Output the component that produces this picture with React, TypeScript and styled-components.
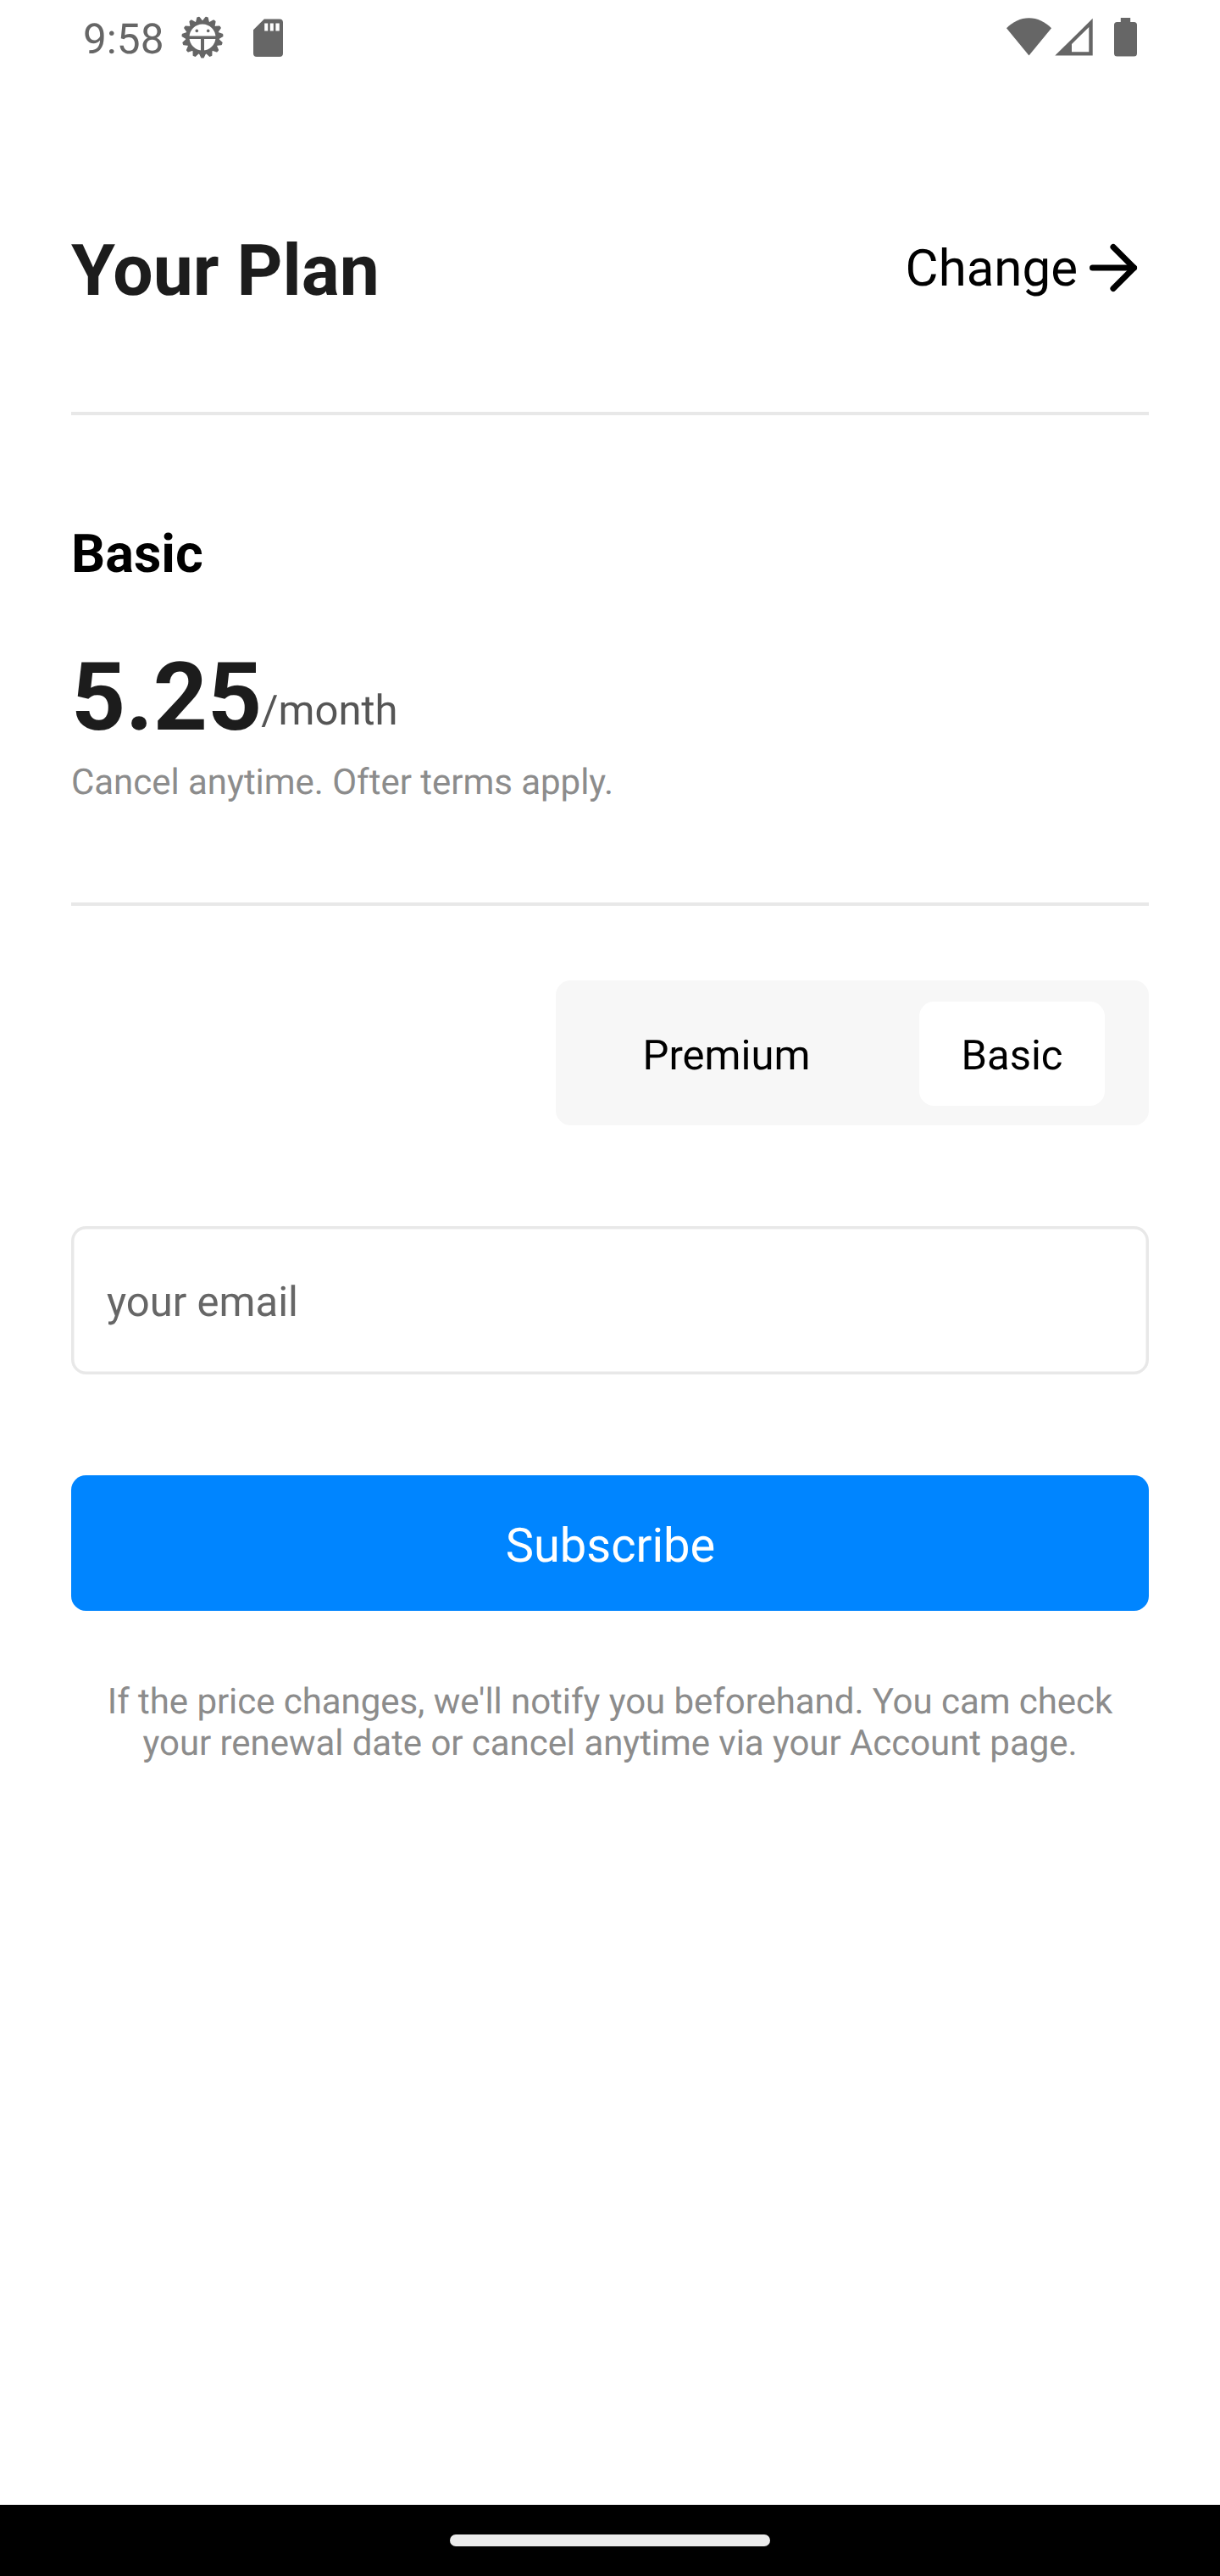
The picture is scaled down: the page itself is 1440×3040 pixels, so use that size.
import React, { useState } from 'react';
import styled, { createGlobalStyle } from 'styled-components';

const GlobalStyle = createGlobalStyle`
  *, *::before, *::after { box-sizing: border-box; }
  body {
    margin: 0;
    background: #ffffff;
    font-family: Roboto, "Liberation Sans", sans-serif;
    text-rendering: geometricPrecision;
  }
  button, input { font-family: inherit; text-rendering: inherit; }
`;

const Screen = styled.div`
  display: flex;
  flex-direction: column;
  width: 1440px;
  height: 3040px;
  background: #ffffff;
  color: #000000;
`;

const StatusBar = styled.header`
  display: flex;
  align-items: center;
  justify-content: space-between;
  height: 88px;
  padding: 0 98px;
  color: #666666;
`;

const StatusGroup = styled.div`
  display: flex;
  align-items: center;
`;

const Clock = styled.span`
  width: 116px;
  padding-top: 6px;
  font-size: 49.5px;
  line-height: 58px;
`;

const StatusIcon = styled.svg<{ $gap?: number }>`
  display: block;
  flex: none;
  margin-left: ${({ $gap = 0 }) => $gap}px;
  fill: currentColor;
`;

const Content = styled.main`
  display: flex;
  flex: 1;
  flex-direction: column;
  padding: 181px 84px 0;
`;

const TitleRow = styled.div`
  display: flex;
  align-items: center;
  justify-content: space-between;
  height: 100px;
`;

const Title = styled.h1`
  margin: 0;
  padding-top: 2px;
  color: #1c1c1c;
  font-size: 84px;
  font-weight: 700;
  line-height: 100px;
`;

const ChangeButton = styled.button`
  display: flex;
  align-items: center;
  height: 84px;
  margin-bottom: 7px;
  padding: 0;
  border: 0;
  background: none;
  color: #000000;
  font-size: 60px;
  line-height: 70px;
`;

const ChangeLabel = styled.span`
  padding-top: 2px;
`;

const Divider = styled.hr<{ $top: number }>`
  width: 100%;
  height: 4px;
  margin: ${({ $top }) => $top}px 0 0;
  border: 0;
  background: #e8e8e8;
`;

const Plan = styled.section`
  display: flex;
  flex-direction: column;
  padding-top: 128px;
`;

const PlanName = styled.h2`
  margin: 0;
  font-size: 63px;
  font-weight: 700;
  line-height: 74px;
`;

const PriceRow = styled.div`
  display: flex;
  align-items: flex-end;
  margin-top: 66px;
`;

const Price = styled.span`
  color: #1c1c1c;
  font-size: 112px;
  font-weight: 700;
  line-height: 132px;
`;

const Period = styled.span`
  margin-left: -1px;
  padding-bottom: 22px;
  color: #555555;
  font-size: 49px;
  line-height: 58px;
`;

const Terms = styled.p`
  margin: 9px 0 0;
  color: #8c8c8c;
  font-size: 42px;
  letter-spacing: -0.03px;
  line-height: 49px;
`;

const Segmented = styled.div`
  display: flex;
  align-items: center;
  align-self: flex-end;
  justify-content: space-between;
  width: 700px;
  height: 171px;
  margin-top: 88px;
  padding: 0 52px 0 53px;
  border-radius: 17.5px;
  background: #f7f7f7;
`;

const Segment = styled.button<{ $active: boolean }>`
  height: 123px;
  margin-top: 2px;
  padding: 5px 49.5px 0;
  border: 0;
  border-radius: 17.5px;
  background: ${({ $active }) => ($active ? '#ffffff' : 'transparent')};
  color: #000000;
  font-size: 49px;
  line-height: 58px;
`;

const EmailInput = styled.input`
  width: 100%;
  height: 175px;
  margin-top: 119px;
  padding: 4px 42px 0;
  border: 0;
  border-radius: 17.5px;
  outline: 0;
  background: #ffffff;
  box-shadow: inset 0 0 0 3.5px #e8e8e8;
  color: #000000;
  font-size: 49px;

  &::placeholder {
    color: #666666;
    opacity: 1;
  }
`;

const SubscribeButton = styled.button`
  height: 160px;
  margin-top: 119px;
  padding: 6px 0 0 1px;
  border: 0;
  border-radius: 17.5px;
  background: #0085ff;
  color: #ffffff;
  font-size: 56px;
  line-height: 66px;
`;

const Note = styled.p`
  margin: 83px 0 0;
  color: #8c8c8c;
  font-size: 42px;
  letter-spacing: -0.055px;
  line-height: 49px;
  text-align: center;
`;

const NavigationBar = styled.footer`
  display: flex;
  justify-content: center;
  height: 84px;
  padding-top: 35px;
  background: #000000;
`;

const HomeHandle = styled.div`
  width: 378px;
  height: 14px;
  border-radius: 7px;
  background: #ebebeb;
`;

const TOOTH_COUNT = 15;
const teeth = Array.from({ length: TOOTH_COUNT }, (_, i) => 180 + (i * 360) / TOOTH_COUNT);

const BugGearIcon = () => (
  <StatusIcon width="50" height="50" viewBox="-25 -25 50 50">
    {teeth.map((angle) => (
      <path
        key={angle}
        d="M-3.6 -18 L-1 -23.6 H1 L3.6 -18 Z"
        stroke="currentColor"
        strokeWidth="1.8"
        strokeLinejoin="round"
        transform={`rotate(${angle})`}
      />
    ))}
    <circle r="17.6" fill="none" stroke="currentColor" strokeWidth="4.2" />
    <path d="M-17 -1.5 H17 V2.1 H2 V18 H-2 V2.1 H-17 Z" />
    <circle cx="-6.7" cy="-7.6" r="1.8" />
    <circle cx="6.7" cy="-7.6" r="1.8" />
  </StatusIcon>
);

const SdCardIcon = () => (
  <StatusIcon $gap={35} width="35" height="45" viewBox="0 -0.5 35 45">
    <path
      fillRule="evenodd"
      d="M12.8 0 H31 Q35 0 35 4 V40.5 Q35 44.5 31 44.5 H4 Q0 44.5 0 40.5 V12.8 Z M13.2 5 V14 H17.2 V5 Z M19.8 5 V14 H23.8 V5 Z M26.4 5 V14 H30.8 V5 Z"
    />
  </StatusIcon>
);

const WifiIcon = () => (
  <StatusIcon width="53" height="46" viewBox="0 0 53 46">
    <path d="M26.5 44.4 L0 12.3 C7.5 4.6 16.5 0.2 26.5 0.2 S45.5 4.6 53 12.3 Z" />
  </StatusIcon>
);

const SignalIcon = () => (
  <StatusIcon $gap={4} width="45" height="46" viewBox="0 0 45 46">
    <path fillRule="evenodd" d="M0.3 44.5 L44.7 0.8 V44.5 Z M20 40.3 H40.3 V11 L20 31 Z" />
  </StatusIcon>
);

const BatteryIcon = () => (
  <StatusIcon $gap={25} width="27" height="46" viewBox="0 0 27 46">
    <path d="M7.8 0 H19.2 V5 H23.5 Q27 5 27 8.5 V42 Q27 45.5 23.5 45.5 H3.5 Q0 45.5 0 42 V8.5 Q0 5 3.5 5 H7.8 Z" />
  </StatusIcon>
);

const ArrowRightIcon = () => (
  <svg
    width="84"
    height="84"
    viewBox="0 0 24 24"
    fill="none"
    stroke="currentColor"
    strokeWidth="2"
    strokeLinecap="round"
    strokeLinejoin="round"
  >
    <path d="M5 12h14" />
    <path d="M12 5l7 7-7 7" />
  </svg>
);

const PLANS = ['Premium', 'Basic'];

export default function App() {
  const [plan, setPlan] = useState('Basic');

  return (
    <>
      <GlobalStyle />
      <Screen>
        <StatusBar>
          <StatusGroup>
            <Clock>9:58</Clock>
            <BugGearIcon />
            <SdCardIcon />
          </StatusGroup>
          <StatusGroup>
            <WifiIcon />
            <SignalIcon />
            <BatteryIcon />
          </StatusGroup>
        </StatusBar>
        <Content>
          <TitleRow>
            <Title>Your Plan</Title>
            <ChangeButton type="button">
              <ChangeLabel>Change</ChangeLabel>
              <ArrowRightIcon />
            </ChangeButton>
          </TitleRow>
          <Divider $top={117} />
          <Plan>
            <PlanName>{plan}</PlanName>
            <PriceRow>
              <Price>5.25</Price>
              <Period>/month</Period>
            </PriceRow>
            <Terms>Cancel anytime. Ofter terms apply.</Terms>
          </Plan>
          <Divider $top={117} />
          <Segmented>
            {PLANS.map((name) => (
              <Segment key={name} type="button" $active={name === plan} onClick={() => setPlan(name)}>
                {name}
              </Segment>
            ))}
          </Segmented>
          <EmailInput type="email" placeholder="your email" />
          <SubscribeButton type="button">Subscribe</SubscribeButton>
          <Note>
            If the price changes, we'll notify you beforehand. You cam check
            <br />
            your renewal date or cancel anytime via your Account page.
          </Note>
        </Content>
        <NavigationBar>
          <HomeHandle />
        </NavigationBar>
      </Screen>
    </>
  );
}
